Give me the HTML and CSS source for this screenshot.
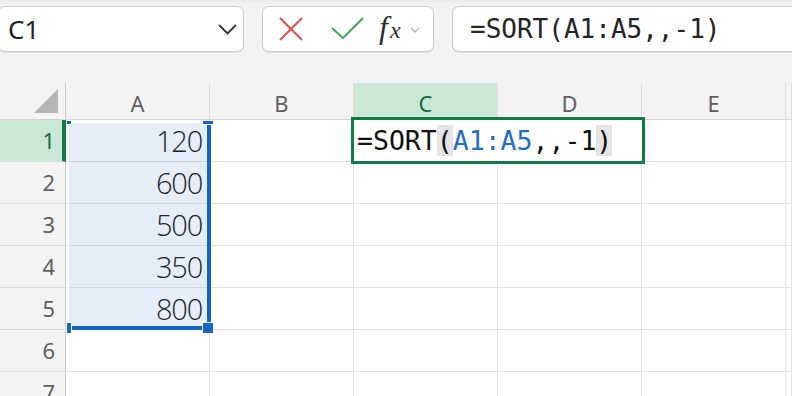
FILE: index.html
```html
<!DOCTYPE html>
<html lang="en">
  <head>
    <meta charset="UTF-8" />
    <meta name="viewport" content="width=device-width, initial-scale=1" />
    <title>Sheet</title>
    <link rel="stylesheet" href="styles.css">
  </head>
  <body>
    <header class="toolbar">
      <div class="name-box">
        <span>C1</span>
        <svg class="chevron" width="19" height="11" viewBox="0 0 19 11">
          <polyline points="1,1 9.5,9.5 18,1" fill="none" stroke="#333" stroke-width="1.8" />
        </svg>
      </div>
      <div class="fx-buttons">
        <svg class="btn-cancel" width="24" height="24" viewBox="0 0 24 24">
          <line x1="1" y1="1" x2="23" y2="23" stroke="#e8484c" stroke-width="2" />
          <line x1="23" y1="1" x2="1" y2="23" stroke="#e8484c" stroke-width="2" />
        </svg>
        <svg class="btn-enter" width="33" height="22" viewBox="0 0 33 22">
          <polyline points="1,11 12,21 32,1" fill="none" stroke="#3aa757" stroke-width="2" />
        </svg>
        <span class="fx">f<span class="fx-x">x</span></span>
        <svg class="chevron-small" width="10" height="7" viewBox="0 0 10 7">
          <polyline points="1,1 5,5 9,1" fill="none" stroke="#b8b8b8" stroke-width="1.4" />
        </svg>
      </div>
      <div class="formula-bar">=SORT(A1:A5,,-1)</div>
    </header>

    <main class="sheet">
      <div class="grid">
        <div class="corner">
          <svg width="24" height="24" viewBox="0 0 24 24"><polygon points="24,0 24,24 0,24" fill="#b5b5b5" /></svg>
        </div>
        <div class="col-head">A</div>
        <div class="col-head">B</div>
        <div class="col-head active">C</div>
        <div class="col-head">D</div>
        <div class="col-head">E</div>
        <div class="col-head"></div>

        <div class="row-head active">1</div>
        <div class="cell num">120</div>
        <div class="cell"></div><div class="cell"></div><div class="cell"></div><div class="cell"></div><div class="cell"></div>

        <div class="row-head">2</div>
        <div class="cell num">600</div>
        <div class="cell"></div><div class="cell"></div><div class="cell"></div><div class="cell"></div><div class="cell"></div>

        <div class="row-head">3</div>
        <div class="cell num">500</div>
        <div class="cell"></div><div class="cell"></div><div class="cell"></div><div class="cell"></div><div class="cell"></div>

        <div class="row-head">4</div>
        <div class="cell num">350</div>
        <div class="cell"></div><div class="cell"></div><div class="cell"></div><div class="cell"></div><div class="cell"></div>

        <div class="row-head">5</div>
        <div class="cell num">800</div>
        <div class="cell"></div><div class="cell"></div><div class="cell"></div><div class="cell"></div><div class="cell"></div>

        <div class="row-head">6</div>
        <div class="cell"></div><div class="cell"></div><div class="cell"></div><div class="cell"></div><div class="cell"></div><div class="cell"></div>

        <div class="row-head">7</div>
        <div class="cell"></div><div class="cell"></div><div class="cell"></div><div class="cell"></div><div class="cell"></div><div class="cell"></div>
      </div>

      <!-- referenced range A1:A5 -->
      <div class="range"></div>
      <div class="handle handle-tl"></div>
      <div class="handle handle-tr"></div>
      <div class="handle handle-bl"></div>
      <div class="handle handle-br"></div>

      <!-- cell C1 in edit mode -->
      <div class="editor">=SORT<span class="paren">(</span><span class="ref">A1:A5</span>,,-1<span class="paren">)</span></div>
    </main>
  </body>
</html>
```

FILE: styles.css
```css
* {
  box-sizing: border-box;
}

body {
  margin: 0;
  background-color: #f3f3f3;
  font-family: "Noto Sans", sans-serif;
  overflow: hidden;
}

.toolbar {
  display: flex;
  gap: 18px;
  height: 83px;
  padding-top: 6px;
  margin-left: -2px;
  background: linear-gradient(#e9e9e9, #f3f3f3 5px);
}

.name-box,
.fx-buttons,
.formula-bar {
  height: 46px;
  background-color: #fff;
  border: 1px solid #cbcbcb;
  border-radius: 7px;
  box-shadow: 0 1px 0 #dedede;
  display: flex;
  align-items: center;
}

.name-box {
  width: 246px;
  flex-shrink: 0;
  justify-content: space-between;
  padding: 0 6px 0 9px;
  font-size: 26px;
  color: #1f1f1f;
}

.fx-buttons {
  width: 172px;
  flex-shrink: 0;
  padding-left: 16px;
}

.btn-enter {
  margin-left: 28px;
  margin-top: -2px;
}

.fx {
  margin-left: 15px;
  font-family: "Liberation Serif", serif;
  font-style: italic;
  font-size: 32px;
  color: #2b2b2b;
  line-height: 1;
  margin-top: -4px;
}

.fx-x {
  font-size: 24px;
  margin-left: 2px;
}

.chevron-small {
  margin-left: 9px;
  margin-top: 2px;
}

.formula-bar {
  flex: 1;
  padding-left: 17px;
  border-right: none;
  border-radius: 7px 0 0 7px;
  font-family: "DejaVu Sans Mono", monospace;
  font-size: 26px;
  color: #242424;
}

.sheet {
  position: relative;
}

.grid {
  display: grid;
  grid-template-columns: 66px repeat(5, 144px) 1fr;
  grid-template-rows: 37px repeat(7, 42px);
  background-color: #fff;
}

.corner {
  background-color: #f3f3f3;
  border-right: 1px solid #c8c8c8;
  border-bottom: 1px solid #d2d2d2;
  display: flex;
  justify-content: flex-end;
  align-items: flex-start;
  padding: 6px 7px 0 0;
}

.col-head {
  background-color: #f3f3f3;
  border-right: 1px solid #dcdcdc;
  border-bottom: 1px solid #d2d2d2;
  text-align: center;
  font-size: 22px;
  line-height: 40px;
  color: #5f5f5f;
}

.col-head.active {
  background-color: #cbe8d6;
  color: #0e6e3d;
}

.row-head {
  background-color: #f3f3f3;
  border-right: 1px solid #c8c8c8;
  border-bottom: 1px solid #dadada;
  text-align: right;
  padding-right: 10px;
  font-size: 22px;
  line-height: 41px;
  color: #5f5f5f;
}

.row-head.active {
  background-color: #cbe8d6;
  color: #0e6e3d;
  border-right: 4px solid #107c41;
  padding-right: 7px;
}

.cell {
  border-right: 1px solid #e1e1e1;
  border-bottom: 1px solid #e1e1e1;
}

.num {
  text-align: right;
  padding-right: 7px;
  font-family: "Open Sans", sans-serif;
  font-weight: 300;
  font-size: 29px;
  letter-spacing: -1.2px;
  line-height: 41px;
  color: #1a1a1a;
}

.range {
  position: absolute;
  left: 67px;
  top: 38px;
  width: 144px;
  height: 209px;
  background-color: rgba(19, 102, 194, 0.11);
  border-left: 2px solid #fff;
  border-top: 2px solid #fff;
  border-right: 4px solid #1366c2;
  border-bottom: 4px solid #1366c2;
}

.handle {
  position: absolute;
  background-color: #1366c2;
  box-shadow: 0 0 0 1px #fff;
}

.handle-tl {
  left: 67px;
  top: 38px;
  width: 4px;
  height: 3px;
}

.handle-tr {
  left: 203px;
  top: 38px;
  width: 10px;
  height: 3px;
}

.handle-bl {
  left: 67px;
  top: 240px;
  width: 4px;
  height: 10px;
}

.handle-br {
  left: 203px;
  top: 240px;
  width: 10px;
  height: 10px;
}

.editor {
  position: absolute;
  left: 351px;
  top: 34px;
  width: 294px;
  height: 47px;
  border: 3px solid #107c41;
  background-color: #fff;
  padding-left: 3px;
  display: flex;
  align-items: center;
  font-family: "DejaVu Sans Mono", monospace;
  font-size: 26.5px;
  color: #111;
  white-space: pre;
}

.paren {
  background-color: #e4e4e4;
}

.ref {
  color: #1f6fc4;
}
```
